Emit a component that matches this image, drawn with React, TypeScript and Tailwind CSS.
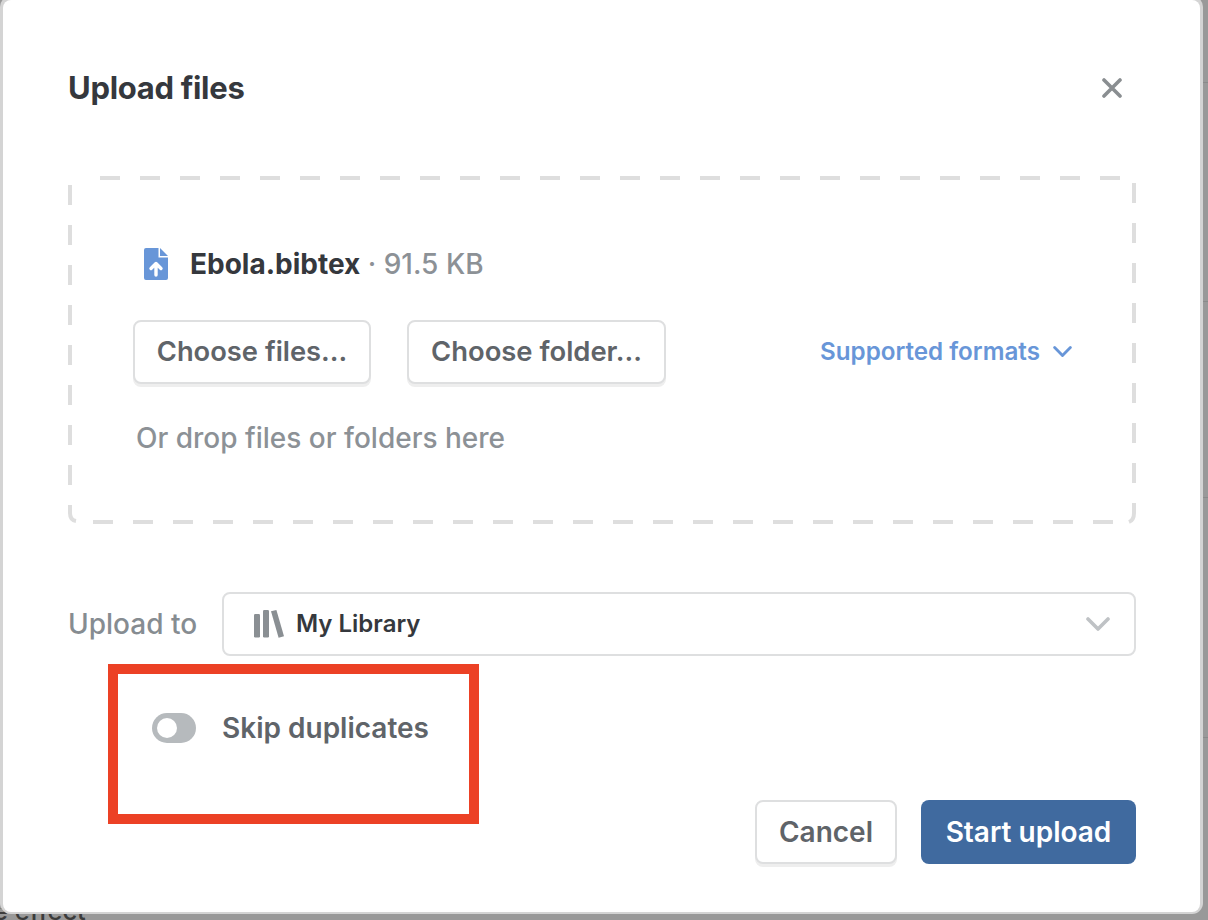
import { ReactNode } from "react";

const FONT = "font-['Inter','Liberation_Sans',sans-serif]";

// Обрывки страницы, которые видны полоской слева и справа от окна.
const LEFT_SPECKS = [
  "top-[114px] h-[8px] bg-[#5d6b85]",
  "top-[212px] h-[14px] bg-[#333333]",
  "top-[340px] h-[14px] bg-[#2f4a78]",
  "top-[432px] h-[12px] bg-[#6e6e6e]",
  "top-[482px] h-[7px] bg-[#6e6e6e]",
  "top-[556px] h-[4px] bg-[#2f4a78]",
  "top-[615px] h-[5px] bg-[#555555]",
  "top-[697px] h-[11px] bg-[#6e6e6e]",
  "top-[780px] h-[14px] bg-[#2f4a78]",
  "top-[818px] h-[5px] bg-[#444444]",
  "top-[830px] h-[5px] bg-[#444444]",
  "top-[866px] h-[5px] bg-[#555555]",
];
const RIGHT_LINES = ["top-[82px]", "top-[301px]", "top-[497px]", "top-[737px]"];

// Кнопка с серой рамкой: файлы, папка, отмена.
function OutlineButton({ children, className }: { children: ReactNode; className: string }) {
  return (
    <button
      className={`h-16 shrink-0 rounded-lg border-2 border-[#dedfe0] bg-white font-semibold text-[#5f6469] shadow-[0_3px_0_#eeeeee] ${className}`}
    >
      {children}
    </button>
  );
}

function Chevron({ color, className }: { color: string; className: string }) {
  return (
    <svg viewBox="0 0 24 14" className={className} fill="none" stroke={color} strokeWidth="3.6" strokeLinecap="round" strokeLinejoin="round">
      <path d="M2 2l10 10L22 2" />
    </svg>
  );
}

// Пунктир зоны: шаг 40px, углы сверху пустые, снизу скруглены.
function DashedFrame() {
  return (
    <svg viewBox="0 0 1068 348" className="absolute inset-0 h-[348px] w-[1068px]" fill="none" stroke="#dedede" strokeWidth="4">
      <path d="M32 2H1052" strokeDasharray="20 20" />
      <path d="M2 9V309" strokeDasharray="20 20" />
      <path d="M1066 7V307" strokeDasharray="20 20" />
      <path d="M25 346H1045" strokeDasharray="20 20" />
      <path d="M2 329V337Q2 344 8 345" />
      <path d="M1066 327V337Q1066 344 1061 346" />
    </svg>
  );
}

function FileUploadIcon() {
  return (
    <svg viewBox="0 0 24 32" className="h-8 w-6 shrink-0">
      <path d="M2 0H14.5V9.5H24V30A2 2 0 0 1 22 32H2A2 2 0 0 1 0 30V2A2 2 0 0 1 2 0Z" fill="#6896d8" />
      <path d="M16 0L24 8H16Z" fill="#6896d8" />
      <path d="M12 27V15.5M7 20.5L12 15.5L17 20.5" fill="none" stroke="#fff" strokeWidth="3.4" strokeLinecap="round" strokeLinejoin="round" />
    </svg>
  );
}

function LibraryIcon() {
  return (
    <svg viewBox="0 0 30 28" className="h-7 w-[30px] shrink-0" fill="#8a8f93">
      <rect x="0" y="4" width="6" height="23.5" rx="1.2" />
      <rect x="9" y="0" width="6" height="27.5" rx="1.2" />
      <path d="M17 1.2L22.4 0L30 26.2L24.6 27.8Z" />
    </svg>
  );
}

export default function App() {
  return (
    <div className={`${FONT} relative h-[920px] w-[1208px] overflow-hidden bg-[#999999]`}>
      {LEFT_SPECKS.map((speck) => (
        <div key={speck} className={`absolute left-0 w-[2px] ${speck}`} />
      ))}
      {RIGHT_LINES.map((line) => (
        <div key={line} className={`absolute right-0 h-px w-[5px] bg-[#8a8a8a] ${line}`} />
      ))}

      {/* Модальное окно */}
      <div className="relative ml-[3px] h-[912px] w-[1197px] rounded-lg bg-white pl-[65px] pr-[64px] pt-16 shadow-[0_-1px_0_3px_#d4d4d4]">
        <div className="flex h-12 items-center justify-between">
          <h1 className="text-[31px] font-bold tracking-[-0.3px] text-[#35383d]">Upload files</h1>
          <svg viewBox="0 0 20 20" className="mr-[14px] h-5 w-5" fill="none" stroke="#8a8e91" strokeWidth="3.6" strokeLinecap="round">
            <path d="M2 2L18 18M18 2L2 18" />
          </svg>
        </div>

        <div className="relative mt-16 h-[348px] pl-[65px] pr-16 pt-[72px]">
          <DashedFrame />
          <div className="ml-[11px] flex h-8 items-center gap-[22px]">
            <FileUploadIcon />
            <p className="text-[28px] font-medium text-[#8c9196]">
              <span className="font-bold text-[#35383d]">Ebola.bibtex</span> · 91.5 KB
            </p>
          </div>
          <div className="mt-10 flex items-center">
            <OutlineButton className="w-[238px] pt-px text-[27.3px]">Choose files...</OutlineButton>
            <OutlineButton className="ml-9 w-[259px] text-[27.4px]">Choose folder...</OutlineButton>
            <div className="ml-[154px] flex items-center gap-[13px] whitespace-nowrap">
              <span className="text-[24.2px] font-semibold text-[#6896d8]">Supported formats</span>
              <Chevron color="#6896d8" className="h-[11px] w-[19px] shrink-0" />
            </div>
          </div>
          <p className="ml-[3px] mt-[36px] text-[28px] font-medium leading-[36px] text-[#8c9196]">Or drop files or folders here</p>
        </div>

        <div className="mt-[68px] flex items-center">
          <span className="w-[154px] text-[28px] font-medium text-[#868c91]">Upload to</span>
          <div className="flex h-16 flex-1 items-center rounded-lg border-2 border-[#dedfe0] pl-[30px] pr-[24px]">
            <LibraryIcon />
            <span className="ml-[12px] text-[24px] font-semibold text-[#35383d]">My Library</span>
            <Chevron color="#bfc2c5" className="ml-auto h-[14px] w-[24px]" />
          </div>
        </div>

        <div className="mt-[57px] flex justify-between">
          <div className="ml-[84px] flex h-[30px] items-center">
            <div className="flex h-[30px] w-11 items-center rounded-full bg-[#b6babd] pl-[5px]">
              <div className="h-5 w-5 rounded-full bg-white" />
            </div>
            <span className="ml-[26px] text-[28px] font-semibold text-[#5f6469]">Skip duplicates</span>
          </div>
          <div className="mt-[87px] flex gap-6">
            <OutlineButton className="w-[142px] text-[28px]">Cancel</OutlineButton>
            <button className="h-16 w-[215px] rounded-lg bg-[#406a9f] text-[28px] font-semibold text-white">Start upload</button>
          </div>
        </div>
      </div>

      {/* Текст страницы под затемнением */}
      <p className="-mt-1 ml-[-7px] h-3 overflow-hidden text-[25.5px] font-medium leading-3 text-[#3c3c3c]">
        <span className="-mt-[3px] block">e effect</span>
      </p>

      {/* Красная рамка-пометка поверх окна */}
      <div className="absolute left-[108px] top-[664px] h-[160px] w-[371px] border-[10px] border-[#ec4125]" />
    </div>
  );
}
